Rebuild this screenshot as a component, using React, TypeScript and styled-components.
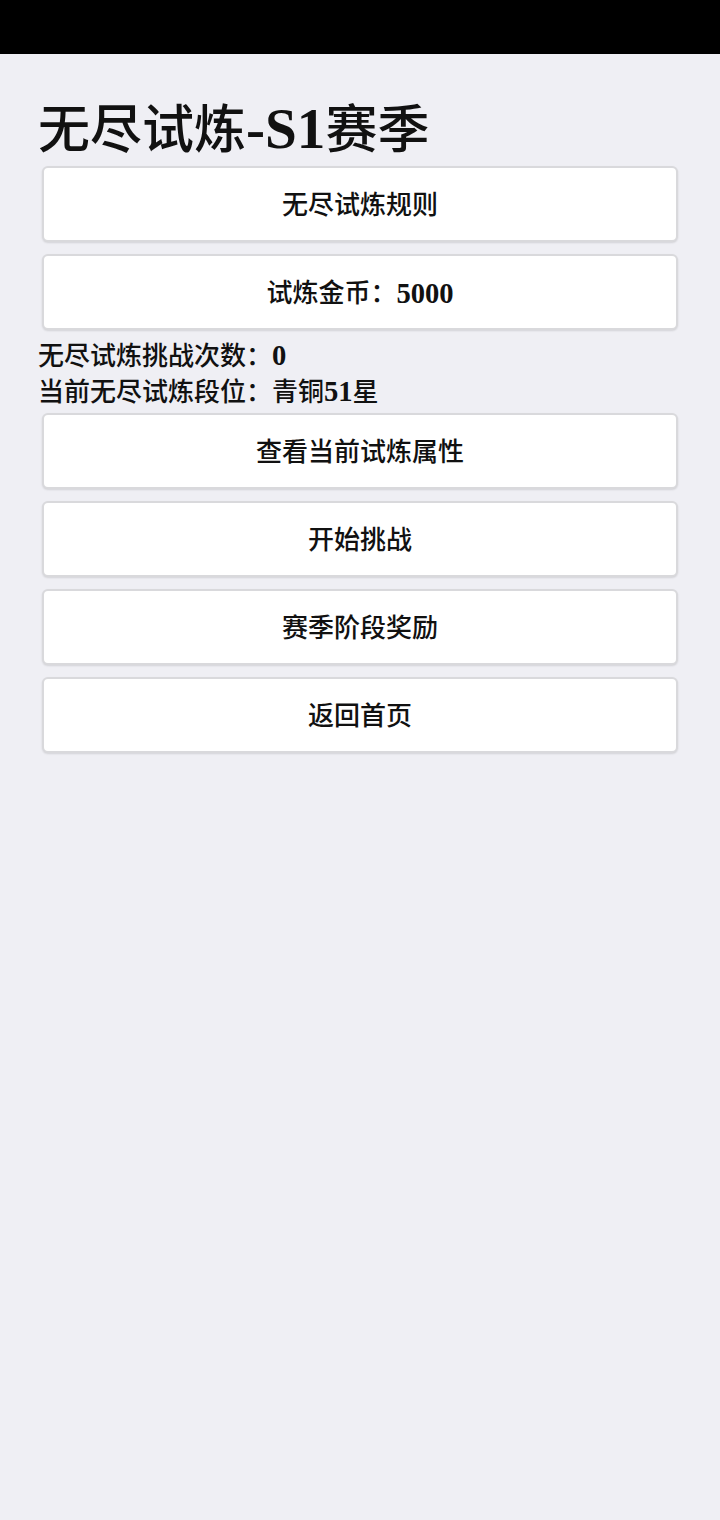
import styled, {createGlobalStyle} from 'styled-components';

const GlobalStyle = createGlobalStyle`
  html, body {
    margin: 0;
    padding: 0;
    background-color: #efeff4;
  }
  body {
    min-height: 100vh;
    font-family: "Liberation Serif", "Noto Sans CJK SC", serif;
    color: #111111;
  }
`;

const menuBottom = ['查看当前试炼属性', '开始挑战', '赛季阶段奖励', '返回首页'];

function App() {
    return (
        <>
            <GlobalStyle/>
            <StatusBar/>
            <Page>
                <Title>无尽试炼<Latin>-S1</Latin>赛季</Title>
                <MenuButton>无尽试炼规则</MenuButton>
                <MenuButton>试炼金币：<Latin>5000</Latin></MenuButton>
                <Info>
                    <InfoLine>无尽试炼挑战次数：<Latin>0</Latin></InfoLine>
                    <InfoLine>当前无尽试炼段位：青铜<Latin>51</Latin>星</InfoLine>
                </Info>
                {menuBottom.map(label => (
                    <MenuButton key={label}>{label}</MenuButton>
                ))}
            </Page>
        </>
    );
}

export default App;


const StatusBar = styled.div`
  height: 54px;
  width: 100%;
  background-color: #000000;
`;

const Page = styled.div`
  display: flex;
  flex-direction: column;
  padding: 45px 38px 40px;
`;

const Latin = styled.span`
  font-family: "Liberation Serif", serif;
  font-size: 1.1em;
  font-weight: 700;
`;

const Title = styled.h1`
  margin: 0 0 5px;
  font-size: 52px;
  line-height: 60px;
  font-weight: 500;
  letter-spacing: 0;
`;

const MenuButton = styled.button`
  display: flex;
  align-items: center;
  justify-content: center;
  height: 76px;
  margin: 0 4px 12px;
  padding: 4px 0 0;
  background-color: #ffffff;
  border: 2px solid #d9d9dc;
  border-radius: 6px;
  box-shadow: 0 1px 2px rgba(0, 0, 0, 0.12);
  font-family: "Liberation Serif", "Noto Sans CJK SC", serif;
  font-size: 26px;
  line-height: 30px;
  font-weight: 500;
  color: #111111;
`;

const Info = styled.div`
  display: flex;
  flex-direction: column;
  margin: -4px 0 3px;
`;

const InfoLine = styled.div`
  font-size: 26px;
  line-height: 35px;
  font-weight: 500;
`;
